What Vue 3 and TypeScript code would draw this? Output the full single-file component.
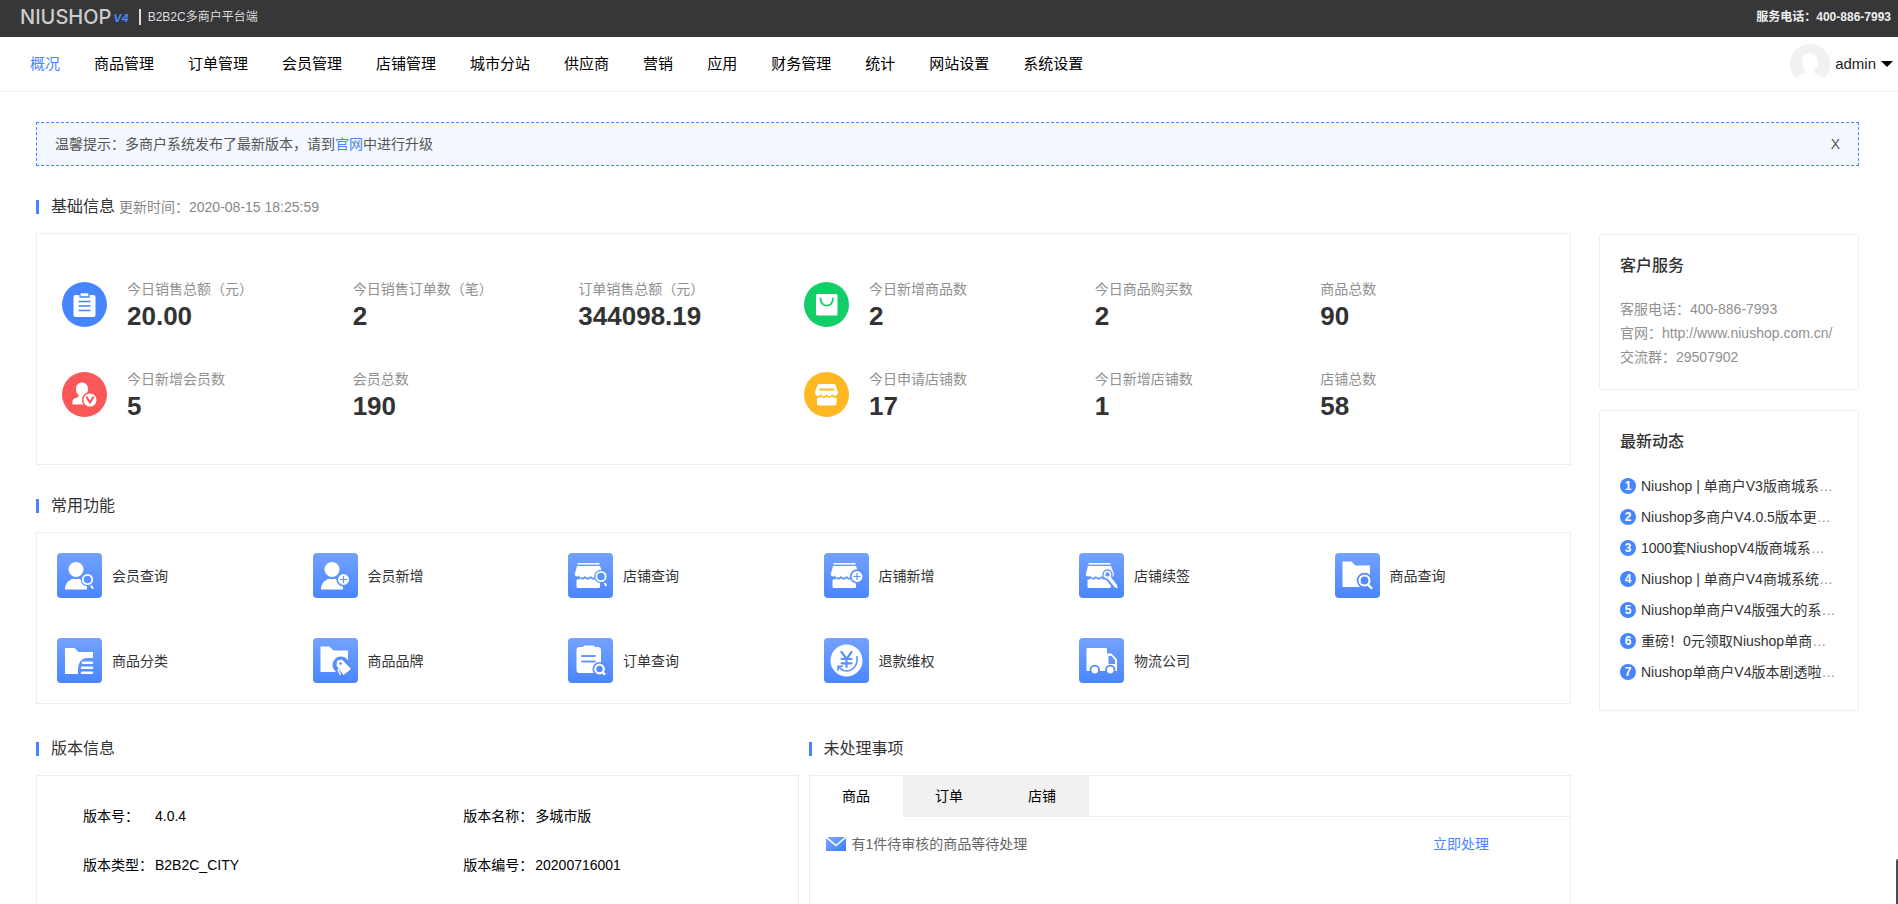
<script setup lang="ts">
import { ref } from 'vue'

interface Stat { label: string; value: string }
interface StatGroup { icon: string; color: string; items: Stat[] }

const menu: string[] = ['概况', '商品管理', '订单管理', '会员管理', '店铺管理', '城市分站', '供应商', '营销', '应用', '财务管理', '统计', '网站设置', '系统设置']
const current = ref('概况')
const noticeOpen = ref(true)

const groups: StatGroup[] = [
  { icon: 'order', color: 'blue', items: [
    { label: '今日销售总额（元）', value: '20.00' },
    { label: '今日销售订单数（笔）', value: '2' },
    { label: '订单销售总额（元）', value: '344098.19' }] },
  { icon: 'bag', color: 'green', items: [
    { label: '今日新增商品数', value: '2' },
    { label: '今日商品购买数', value: '2' },
    { label: '商品总数', value: '90' }] },
  { icon: 'member', color: 'red', items: [
    { label: '今日新增会员数', value: '5' },
    { label: '会员总数', value: '190' }] },
  { icon: 'store', color: 'orange', items: [
    { label: '今日申请店铺数', value: '17' },
    { label: '今日新增店铺数', value: '1' },
    { label: '店铺总数', value: '58' }] },
]

const shortcuts = [
  { base: 'user', badge: 'search', label: '会员查询' },
  { base: 'user', badge: 'plus', label: '会员新增' },
  { base: 'shop', badge: 'search', label: '店铺查询' },
  { base: 'shop', badge: 'plus', label: '店铺新增' },
  { base: 'shop', badge: 'pen', label: '店铺续签' },
  { base: 'folder', badge: 'find', label: '商品查询' },
  { base: 'folder', badge: 'list', label: '商品分类' },
  { base: 'folder', badge: 'tag', label: '商品品牌' },
  { base: 'clip', badge: 'find', label: '订单查询' },
  { base: 'refund', badge: '', label: '退款维权' },
  { base: 'truck', badge: '', label: '物流公司' },
]

const versions = [
  { label: '版本号：', value: '4.0.4' },
  { label: '版本名称：', value: '多城市版' },
  { label: '版本类型：', value: 'B2B2C_CITY' },
  { label: '版本编号：', value: '20200716001' },
]

const tabs = ['商品', '订单', '店铺']
const tab = ref('商品')

const contacts = ['客服电话：400-886-7993', '官网：http://www.niushop.com.cn/', '交流群：29507902']
const news = [
  'Niushop | 单商户V3版商城系',
  'Niushop多商户V4.0.5版本更',
  '1000套NiushopV4版商城系',
  'Niushop | 单商户V4商城系统',
  'Niushop单商户V4版强大的系',
  '重磅！0元领取Niushop单商',
  'Niushop单商户V4版本剧透啦',
]
</script>

<template>
  <div class="app">
    <header class="topbar">
      <div class="brand">
        <span class="logo">NIUSHOP</span><span class="logo-version">V4</span>
        <span class="platform">B2B2C多商户平台端</span>
      </div>
      <span class="hotline">服务电话：400-886-7993</span>
    </header>

    <div class="navbar">
      <nav class="menu">
        <a v-for="m in menu" :key="m" href="#" :class="{ active: m === current }" @click.prevent="current = m">{{ m }}</a>
      </nav>
      <button class="account" type="button">
        <svg width="40" height="40" viewBox="0 0 40 40" aria-hidden="true">
          <circle cx="20" cy="20" r="20" fill="#f1f1f1" />
          <path d="M20 9c5 0 8 4 8 9 0 4-2 7-4 9v2c4 1 9 3 12 7v5H4v-5c3-4 8-6 12-7v-2c-2-2-4-5-4-9 0-5 3-9 8-9z" fill="#fff" />
        </svg>
        <span>admin</span>
        <i class="caret"></i>
      </button>
    </div>

    <main class="page">
      <div v-if="noticeOpen" class="notice">
        <p>温馨提示：多商户系统发布了最新版本，请到<a href="#">官网</a>中进行升级</p>
        <button type="button" @click="noticeOpen = false">X</button>
      </div>

      <div class="columns">
        <div class="primary">
          <section>
            <h2>基础信息<small>更新时间：2020-08-15 18:25:59</small></h2>
            <div class="card stats">
              <div v-for="g in groups" :key="g.icon" class="group">
                <svg :class="['round', g.color]" width="45" height="45" viewBox="0 0 45 45" aria-hidden="true">
                  <circle cx="22.5" cy="22.5" r="22.5" fill="currentColor" />
                  <g v-if="g.icon === 'order'">
                    <rect x="11.5" y="13" width="22" height="22" rx="2" fill="#fff" />
                    <path d="M18 10.500h9v4.500h-9z" fill="#fff" stroke="currentColor" stroke-width="1.300" />
                    <path d="M16.500 19.500h12M16.500 24h12M16.500 28.500h12" stroke="currentColor" stroke-width="1.600" />
                  </g>
                  <g v-else-if="g.icon === 'bag'">
                    <rect x="12" y="12" width="21.500" height="21.500" rx="1.500" fill="#fff" />
                    <path d="M16.500 16.500c0 9.500 12.500 9.500 12.500 0" fill="none" stroke="currentColor" stroke-width="1.800" stroke-linecap="round" />
                  </g>
                  <g v-else-if="g.icon === 'member'">
                    <path d="M20 10.500c4 0 6 3 6 6.500 0 2.500-1 4.500-2.500 6v2l5 2v5.500H10.500v-3c0-3 3.500-3.500 6-4.800v-1.700c-1.500-1.500-2.500-3.500-2.500-6 0-3.500 2-6.500 6-6.500z" fill="#fff" />
                    <circle cx="28" cy="28" r="7.300" fill="#fff" stroke="currentColor" stroke-width="1.500" />
                    <path d="M24.800 25.500l3.200 5 3.200-5" fill="none" stroke="currentColor" stroke-width="2.200" stroke-linecap="round" stroke-linejoin="round" />
                  </g>
                  <g v-else>
                    <path d="M14 12h17l3 8c0 5-5.500 5-5.800 1.500-.5 3.500-5.500 3.500-5.700 0-.3 3.500-5.200 3.500-5.700 0C16.500 25 11 25 11 20z" fill="#fff" />
                    <path d="M13 26c2 0 3-.7 4-1.700 1.500 2 4.500 2 5.500.2 1 1.800 4 1.800 5.500-.2 1 1 2 1.700 4.500 1.700v5.500a2 2 0 0 1-2 2h-15.500a2 2 0 0 1-2-2z" fill="#fff" />
                    <path d="M16 17.500h13.500" stroke="currentColor" stroke-width="1.800" stroke-linecap="round" />
                  </g>
                </svg>
                <div v-for="s in g.items" :key="s.label" class="stat">
                  <span>{{ s.label }}</span>
                  <strong>{{ s.value }}</strong>
                </div>
              </div>
            </div>
          </section>

          <section>
            <h2>常用功能</h2>
            <div class="card shortcuts">
              <a v-for="s in shortcuts" :key="s.label" href="#" @click.prevent>
                <span class="tile">
                  <svg width="45" height="45" viewBox="0 0 45 45" aria-hidden="true">
                    <g fill="#fff">
                      <template v-if="s.base === 'user'">
                        <circle cx="19" cy="16.500" r="7.500" />
                        <path d="M8 36.500c0-6 3.500-9.500 8-10.800 2 .6 4 .6 6 0l8 3v7.800z" />
                      </template>
                      <template v-else-if="s.base === 'shop'">
                        <path d="M9.500 10h22v1.600h-22z" />
                        <path d="M9 13h23l3 8c0 4.500-5 4.500-6.500 1.500-1 3-5 3-5.800 0-1 3-4.900 3-5.900 0-1 3-4.800 3-5.800 0-.8 1.500-4.200 1.500-4.200-1.500z" />
                        <path d="M8.500 26.500c1.500.3 2.500-.3 3.500-1.300 1.500 1.900 3.900 1.700 5-.2 1.500 2 4 2 5.500 0 1.500 2 4 2 5.500 0l4 1.500v7a1.500 1.500 0 0 1-1.500 1.500h-20.500a1.500 1.500 0 0 1-1.500-1.500z" />
                      </template>
                      <template v-else-if="s.base === 'folder'">
                        <path v-if="s.badge === 'list'" d="M8 10h9.500l4 4H36v6h-7c-5 1-8 5-8 12v4H8z" />
                        <path v-else d="M7.500 8.500h9l4 4H35v21.500H7.500z" />
                      </template>
                      <path v-else-if="s.base === 'clip'" d="M11.500 9H15l1-1.500h10L27 9h3a3 3 0 0 1 3 3v23H11.500a3 3 0 0 1-3-3V12a3 3 0 0 1 3-3z" />
                      <circle v-else-if="s.base === 'refund'" cx="22.500" cy="22.500" r="16" />
                      <path v-else d="M8.500 10H27a1 1 0 0 1 1 1v4.500h4.500L38 21.500V33H8.500a1 1 0 0 1-1-1V11a1 1 0 0 1 1-1z" />
                    </g>
                    <path v-if="s.base === 'clip'" d="M14 18h13M14 23.500h13" stroke="#6698ff" stroke-width="1.800" stroke-linecap="round" />
                    <g v-if="s.base === 'refund'" fill="none" stroke="#5c92ff" stroke-width="2.200" stroke-linecap="round">
                      <path d="M17.500 14l5 7 5-7M22.500 21v8M17.500 21h10M17.500 25.300h10" />
                      <path d="M33 18.500C34 26 30 32.500 23 33c-3.500 0-6-1.500-8-4" stroke-width="1.600" />
                      <path d="M14 32.500v-4.300h4.500" stroke-width="1.600" />
                    </g>
                    <g v-if="s.base === 'truck'">
                      <path d="M29.500 18h3l3.500 4v4h-6.500z" fill="#5f94ff" />
                      <circle cx="15.800" cy="32" r="4.300" fill="#fff" stroke="#508aff" stroke-width="1.800" />
                      <circle cx="31.300" cy="32" r="4.300" fill="#fff" stroke="#508aff" stroke-width="1.800" />
                    </g>
                    <g v-if="s.badge === 'plus'">
                      <circle :cx="s.base === 'shop' ? 33 : 30.500" :cy="s.base === 'shop' ? 23.500 : 26.500" r="6.300" fill="#fff" stroke="#5b92ff" stroke-width="1.700" />
                      <path :d="s.base === 'shop' ? 'M29.500 23.500h7M33 20v7' : 'M27 26.500h7M30.500 23v7'" stroke="#5b92ff" stroke-width="1.200" />
                    </g>
                    <g v-if="s.badge === 'search'">
                      <circle :cx="s.base === 'shop' ? 33 : 30.500" :cy="s.base === 'shop' ? 23.500 : 26.500" r="6.800" fill="#5b92ff" />
                      <circle :cx="s.base === 'shop' ? 33 : 30.500" :cy="s.base === 'shop' ? 23.500 : 26.500" r="4.700" fill="none" stroke="#fff" stroke-width="1.800" />
                      <path :d="s.base === 'shop' ? 'M36.500 30l1.800 3' : 'M34 32.500l2 3.200'" stroke="#fff" stroke-width="1.900" />
                    </g>
                    <g v-if="s.badge === 'find'">
                      <circle :cx="s.base === 'clip' ? 31.500 : 29.500" :cy="s.base === 'clip' ? 31 : 27.500" :r="s.base === 'clip' ? 7 : 7.800" fill="#538cff" />
                      <circle :cx="s.base === 'clip' ? 31.500 : 29.500" :cy="s.base === 'clip' ? 31 : 27.500" :r="s.base === 'clip' ? 4.300 : 5" fill="none" stroke="#fff" stroke-width="2.200" />
                      <path :d="s.base === 'clip' ? 'M34.500 34l2.500 2.800' : 'M33 31.500l4 4.300'" stroke="#fff" stroke-width="2.400" />
                    </g>
                    <path v-if="s.badge === 'list'" d="M26 24.800h9M25 29.800h10M25 34.800h10" stroke="#fff" stroke-width="2.600" stroke-linecap="round" />
                    <g v-if="s.badge === 'tag'">
                      <circle cx="28" cy="27" r="8.500" fill="#578fff" />
                      <path d="M24.500 23l4.500-1 8.500 9-7 5.500-6.500-9z" fill="#fff" stroke="#fff" stroke-width="1" stroke-linejoin="round" />
                      <path d="M25 31l2.500 6" stroke="#fff" stroke-width="1.500" />
                      <circle cx="27.500" cy="25.500" r="1.300" fill="#578fff" />
                    </g>
                    <g v-if="s.badge === 'pen'">
                      <path d="M28 22l9.500 12.500" stroke="#578fff" stroke-width="7" />
                      <circle cx="28.500" cy="21.500" r="5.200" fill="#5f96ff" />
                      <circle cx="28.500" cy="21.500" r="3" fill="none" stroke="#fff" stroke-width="1.700" />
                      <path d="M28 25l3.500-1.500 6.500 8.500.5 3.500-3-1.500z" fill="#fff" />
                    </g>
                  </svg>
                </span>
                {{ s.label }}
              </a>
            </div>
          </section>

          <div class="bottom">
            <section>
              <h2>版本信息</h2>
              <div class="card panel">
                <dl class="versions">
                  <div v-for="v in versions" :key="v.label">
                    <dt>{{ v.label }}</dt>
                    <dd>{{ v.value }}</dd>
                  </div>
                </dl>
              </div>
            </section>
            <section>
              <h2>未处理事项</h2>
              <div class="card panel">
                <div class="tabs" role="tablist">
                  <button v-for="t in tabs" :key="t" type="button" role="tab" :aria-selected="t === tab" :class="{ active: t === tab }" @click="tab = t">{{ t }}</button>
                </div>
                <div class="todo">
                  <svg width="20" height="14" viewBox="0 0 20 14" aria-hidden="true">
                    <defs><linearGradient id="mail" x1="0" y1="0" x2="1" y2="1"><stop offset="0" stop-color="#7eaaff" /><stop offset="1" stop-color="#3b7cfb" /></linearGradient></defs>
                    <rect width="20" height="14" fill="url(#mail)" />
                    <path d="M0 0l10 8.500L20 0" fill="none" stroke="#fff" stroke-width="1.500" />
                  </svg>
                  <span>有1件待审核的商品等待处理</span>
                  <a href="#">立即处理</a>
                </div>
              </div>
            </section>
          </div>
        </div>

        <aside class="side">
          <section class="card box">
            <h3>客户服务</h3>
            <p v-for="c in contacts" :key="c">{{ c }}</p>
          </section>
          <section class="card box news">
            <h3>最新动态</h3>
            <ol>
              <li v-for="(n, i) in news" :key="n">
                <b>{{ i + 1 }}</b><span><a href="#">{{ n }}</a>…</span>
              </li>
            </ol>
          </section>
        </aside>
      </div>
    </main>
    <div class="dock"></div>
  </div>
</template>

<style>
html {
  scrollbar-width: none;
}
body {
  background: #fff;
}
</style>

<style scoped>
.app {
  font-family: "Liberation Sans", "Noto Sans CJK SC", sans-serif;
  font-size: 14px;
  line-height: 24px;
  color: #333;
}
h2, h3, p, dl, dd, ol {
  margin: 0;
  padding: 0;
}
a {
  color: inherit;
  text-decoration: none;
}
button {
  padding: 0;
  border: 0;
  background: none;
  color: inherit;
  font: inherit;
  cursor: pointer;
}
svg {
  display: block;
  flex: none;
}
.topbar {
  display: flex;
  align-items: center;
  justify-content: space-between;
  height: 37px;
  padding: 0 7px 0 20px;
  box-sizing: border-box;
  background: #373739;
  color: #eee;
  font-size: 12px;
}
.brand {
  display: flex;
  align-items: center;
  height: 27px;
  padding-bottom: 4px;
}
.topbar, .brand {
  line-height: 18px;
}
.logo {
  font-family: Inter, sans-serif;
  font-size: 20px;
  font-weight: 500;
  color: #ccc;
}
.logo-version {
  margin-left: 2px;
  padding-top: 3px;
  font-family: Inter, sans-serif;
  font-size: 11px;
  font-weight: 700;
  font-style: italic;
  color: #4685fd;
}
.platform {
  margin-left: 10px;
  padding-left: 7px;
  border-left: 2px solid #ddd;
  line-height: 16px;
  color: #ddd;
}
.hotline {
  padding-bottom: 4px;
  font-weight: 700;
}
.navbar {
  display: flex;
  align-items: center;
  justify-content: space-between;
  height: 54px;
  padding: 0 5px 0 30px;
  border-bottom: 1px solid #eee;
  color: #000;
  font-size: 15px;
}
.menu {
  display: flex;
  gap: 34px;
}
.menu .active {
  color: #4685fd;
}
.account {
  display: flex;
  align-items: center;
  gap: 5px;
}
.account span {
  color: #222;
}
.caret {
  border: 6px solid transparent;
  border-top-color: #000;
  border-bottom-width: 0;
}
.page {
  padding: 30px 39px 40px 36px;
}
.notice {
  display: flex;
  align-items: center;
  justify-content: space-between;
  height: 42px;
  padding: 0 18px;
  border: 1px dashed #4685fd;
  background: #f3f8ff;
  color: #555;
}
.notice a {
  color: #4685fd;
}
.columns {
  display: flex;
  align-items: flex-start;
  gap: 28px;
}
.primary {
  flex: 1;
  min-width: 0;
}
section h2 {
  display: flex;
  align-items: center;
  margin: 29px 0 14px;
  font-size: 16px;
  font-weight: 400;
  line-height: 24px;
}
h2::before {
  content: "";
  width: 3px;
  height: 14px;
  margin-right: 12px;
  background: #4685fd;
}
h2 small {
  margin-left: 4px;
  font-size: 14px;
  color: #888;
}
.card {
  border: 1px solid #eee;
  background: #fff;
}
.stats {
  display: grid;
  grid-template-columns: 1fr 1fr;
  row-gap: 36px;
  padding: 43px 24px 43px 25px;
}
.group {
  display: grid;
  grid-template-columns: 65px repeat(3, 1fr);
  align-items: center;
}
.stat span, .stat strong {
  display: block;
}
.stat span {
  color: #909090;
}
.stat strong {
  font-size: 26px;
  line-height: 30px;
}
.blue { color: #4685fd; }
.green { color: #13ce66; }
.red { color: #fa5858; }
.orange { color: #ffb822; }
.shortcuts {
  display: grid;
  grid-template-columns: repeat(6, 1fr);
  row-gap: 40px;
  padding: 20px 0;
}
.shortcuts a {
  display: flex;
  align-items: center;
  gap: 10px;
  padding-left: 20px;
}
.tile {
  border-radius: 4px;
  background: linear-gradient(#73a2ff, #4a86ff);
}
.bottom {
  display: grid;
  grid-template-columns: 1fr 1fr;
  gap: 10px;
  padding-top: 4px;
}
.panel {
  min-height: 180px;
}
.versions {
  display: grid;
  grid-template-columns: 1fr 1fr;
  row-gap: 25px;
  padding-top: 28px;
  color: #000;
}
.versions div {
  display: flex;
  padding-left: 46px;
}
.versions dt {
  min-width: 72px;
}
.tabs {
  display: flex;
  border-bottom: 1px solid #eee;
  color: #000;
}
.tabs button {
  min-width: 93px;
  height: 40px;
  background: #f1f1f1;
}
.tabs .active {
  margin-bottom: -1px;
  padding-bottom: 1px;
  height: 41px;
  background: #fff;
}
.todo {
  display: flex;
  align-items: center;
  gap: 6px;
  padding: 15px 81px 15px 16px;
  color: #666;
}
.todo a {
  margin-left: auto;
  color: #4685fd;
}
.side {
  width: 260px;
  margin-top: 68px;
}
.box {
  padding: 19px 20px 20px;
  border-radius: 2px;
  color: #909090;
}
.box h3 {
  margin-bottom: 19px;
  font-size: 16px;
  font-weight: 500;
  color: #333;
}
.news {
  margin-top: 20px;
  padding-bottom: 23px;
}
.news h3 {
  margin-bottom: 16px;
}
.news ol {
  list-style: none;
}
.news li {
  display: flex;
  align-items: center;
  gap: 5px;
  height: 31px;
  white-space: nowrap;
}
.news b {
  width: 16px;
  border-radius: 50%;
  background: #4685fd;
  color: #fff;
  font-size: 12px;
  line-height: 16px;
  text-align: center;
}
.news a {
  color: #333;
}
.dock {
  position: fixed;
  right: 0;
  bottom: 0;
  width: 2px;
  height: 45px;
  border-top-left-radius: 2px;
  background: #434b59;
}
</style>
